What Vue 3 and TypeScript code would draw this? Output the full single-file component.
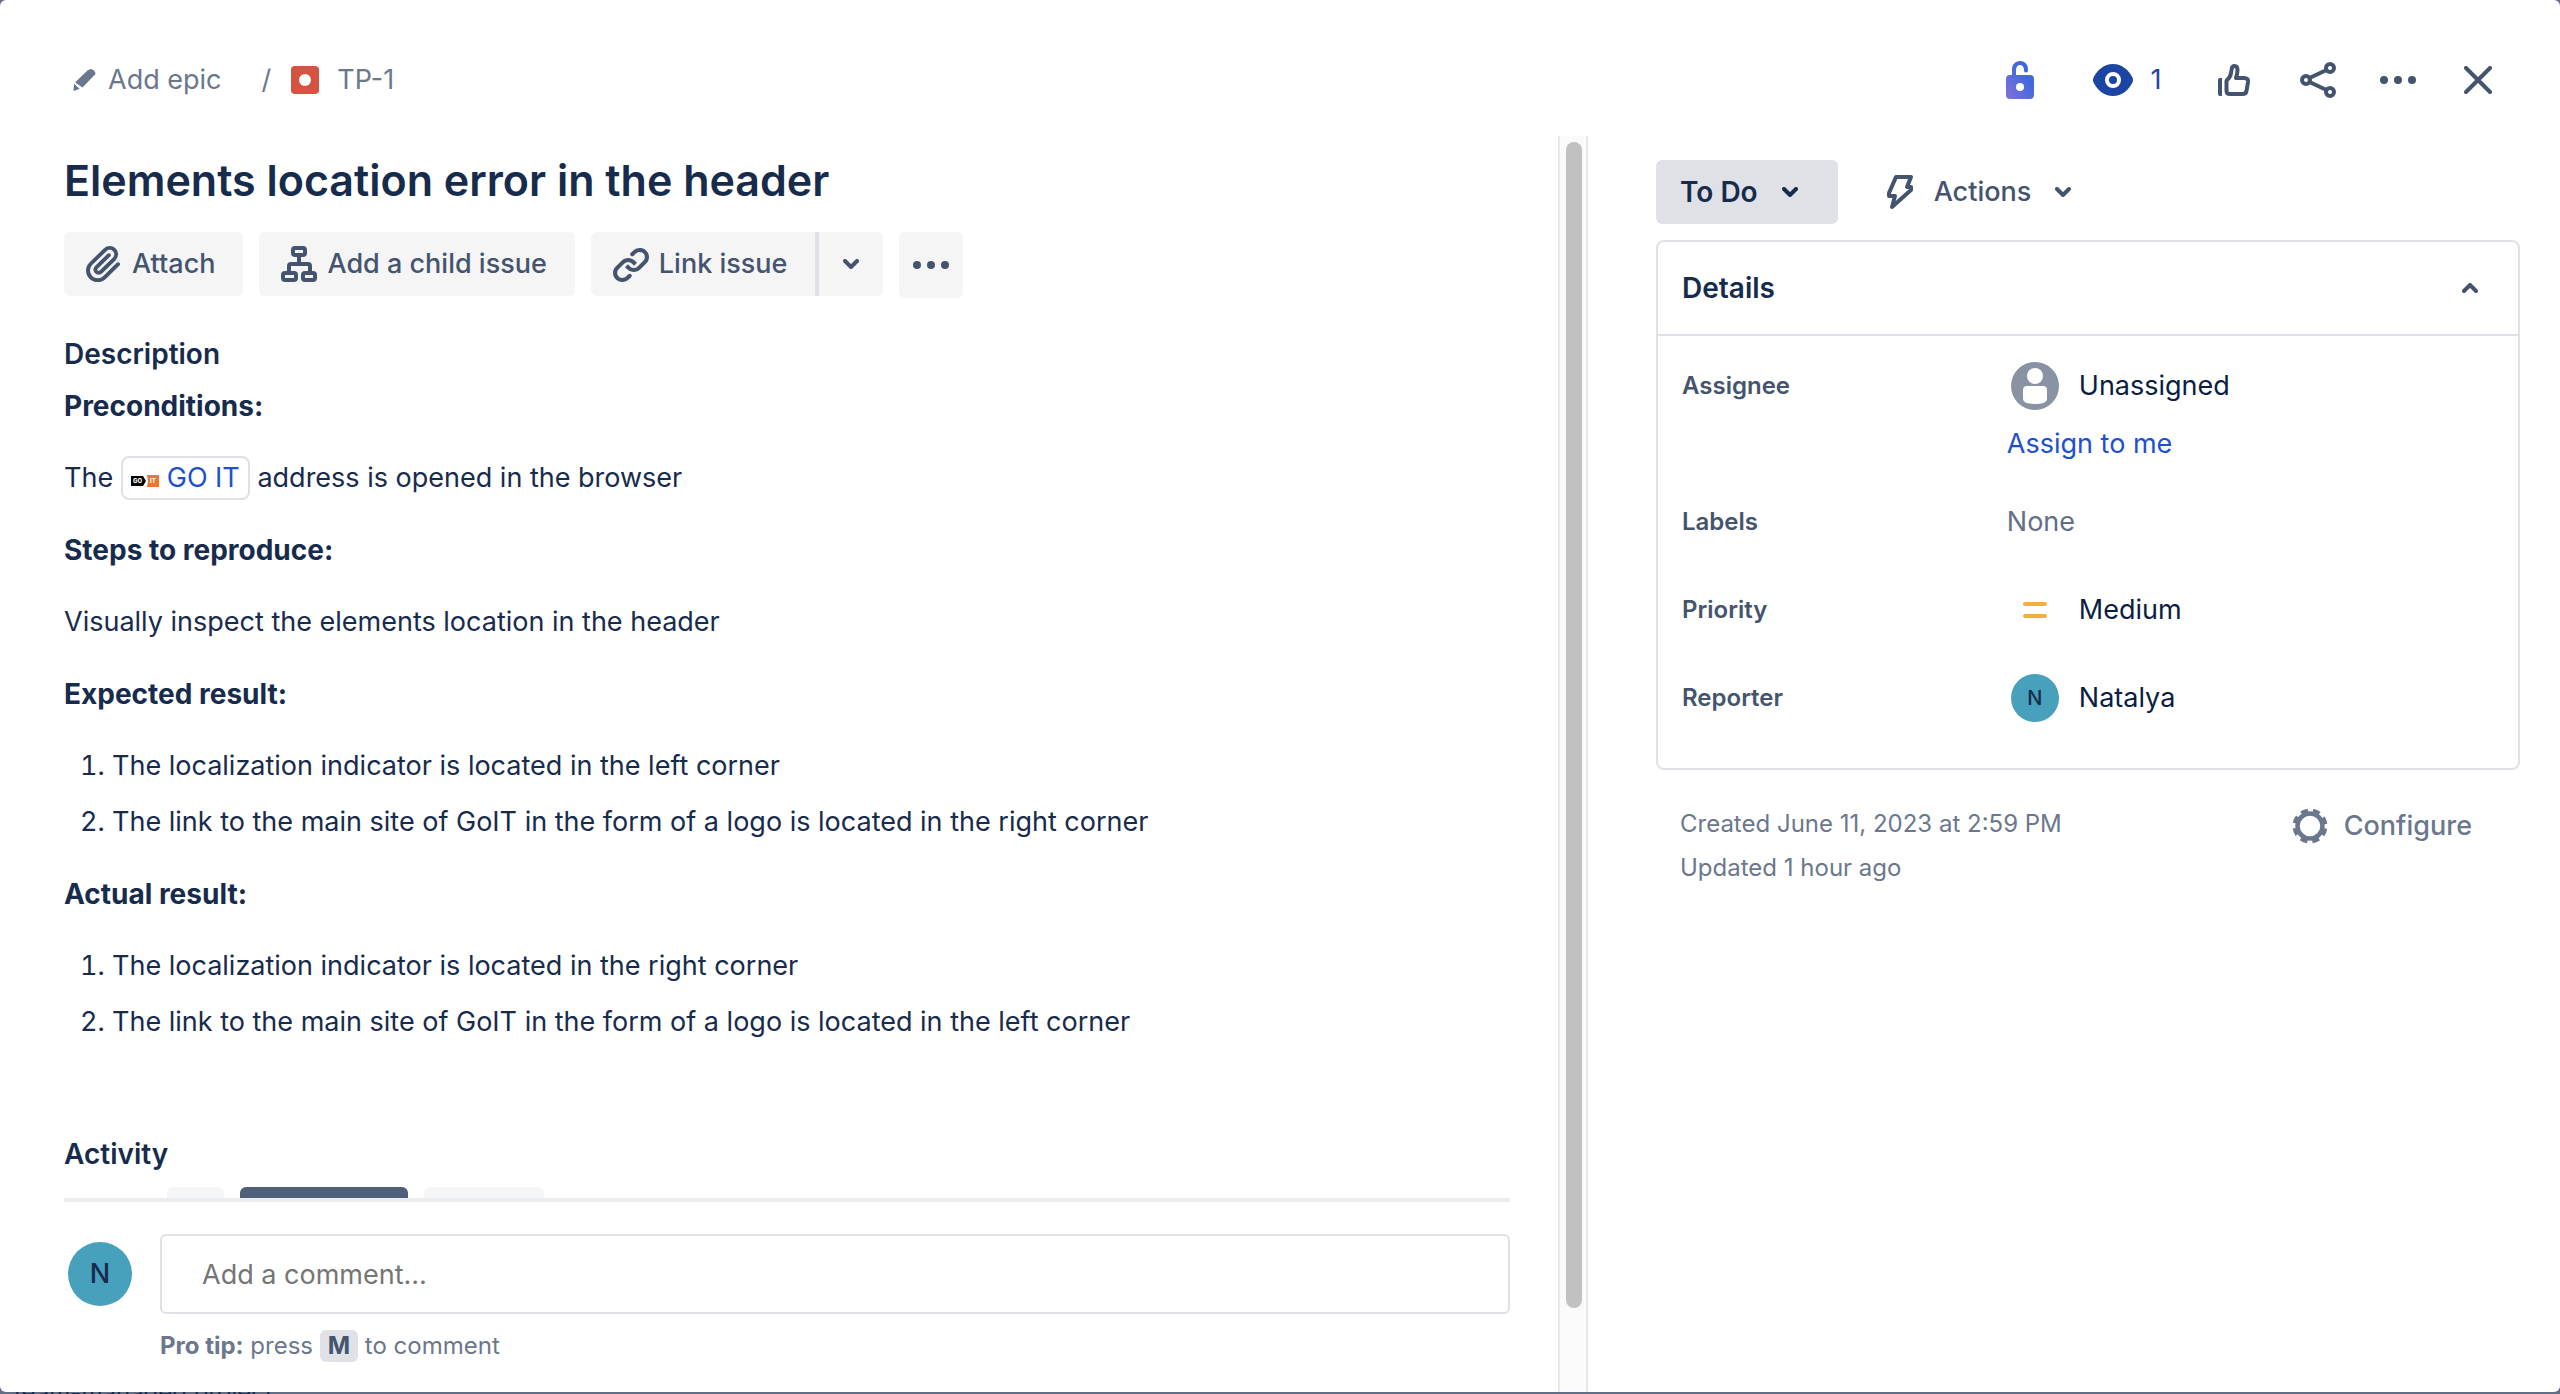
<script setup lang="ts">
import { ref } from 'vue'

interface ResultBlock {
  title: string
  items: string[]
}

const results: ResultBlock[] = [
  {
    title: 'Expected result:',
    items: [
      'The localization indicator is located in the left corner',
      'The link to the main site of GoIT in the form of a logo is located in the right corner',
    ],
  },
  {
    title: 'Actual result:',
    items: [
      'The localization indicator is located in the right corner',
      'The link to the main site of GoIT in the form of a logo is located in the left corner',
    ],
  },
]

const comment = ref('')
</script>

<template>
  <div class="page">
    <main class="modal">
      <header class="topbar">
        <nav class="crumbs" aria-label="Breadcrumbs">
          <button type="button" class="plain crumb-epic">
            <svg width="24" height="24" viewBox="0 0 24 24" aria-hidden="true">
              <path d="M15.500 2.500l3-1.500q2 0 3.500 1.500t1.500 3.500l-13 13.500-7.500-5z" fill="#6b778c" />
              <path d="M2.200 15.500l5.600 5.300-5.300 2q-1.300.3-1-1z" fill="#6b778c" />
              <path d="M1.500 14l8 7.500" stroke="#fff" stroke-width="1.500" />
            </svg>
            Add epic
          </button>
          <span class="slash">/</span>
          <a href="#" class="crumb-key">
            <svg width="28" height="28" viewBox="0 0 28 28" aria-hidden="true">
              <rect width="28" height="28" rx="4" fill="#d75341" />
              <circle cx="14" cy="14" r="6" fill="#fff" />
            </svg>
            TP-1
          </a>
        </nav>
        <div class="tools">
          <button type="button" class="plain tool lock" aria-label="Restrictions">
            <svg width="28" height="40" viewBox="0 0 28 40" aria-hidden="true">
              <defs>
                <linearGradient id="lock" x1="1" y1="0" x2="0" y2="1">
                  <stop offset="0.300" stop-color="#3d68dd" />
                  <stop offset="1" stop-color="#8270db" />
                </linearGradient>
              </defs>
              <path
                fill="url(#lock)" fill-rule="evenodd"
                d="M6 15V9.500C6 4.500 9.500 1 14 1s8 3 8 8.500v1a2 2 0 0 1-4 0V10c0-3-1.500-5-4-5s-4 2-4 5v5h14a4 4 0 0 1 4 4v16a4 4 0 0 1-4 4H4a4 4 0 0 1-4-4V19a4 4 0 0 1 4-4zM14 23a4 4 0 1 0 0 8 4 4 0 0 0 0-8z"
              />
            </svg>
          </button>
          <button type="button" class="plain tool watch" aria-label="Watchers: 1">
            <svg width="40" height="32" viewBox="0 0 40 32" aria-hidden="true">
              <path d="M20 0c9 0 15.500 6 19.200 13q1.600 3 0 6C35.500 26 29 32 20 32S4.500 26 .8 19q-1.600-3 0-6C4.500 6 11 0 20 0z" fill="#1c44a2" />
              <circle cx="20" cy="16" r="6" fill="#1c44a2" stroke="#fff" stroke-width="4" />
            </svg>
            1
          </button>
          <button type="button" class="plain tool vote" aria-label="Vote">
            <svg width="32" height="32" viewBox="0 0 32 32" fill="none" stroke="#44546f" stroke-width="4" stroke-linejoin="round" aria-hidden="true">
              <path d="M0 16q0-2 2-2h2v18H2q-2 0-2-2z" fill="#44546f" stroke="none" />
              <path d="M9 16q3.500-3 4-7l.7-4Q14.200 2 16.500 2q3 0 3 4 0 3-1.500 8h8q4.500 0 4 4l-1.500 9q-.6 3-4 3H12q-3.500 0-3.500-3.500V17z" />
            </svg>
          </button>
          <button type="button" class="plain tool" aria-label="Share">
            <svg width="36" height="36" viewBox="0 0 36 36" fill="none" stroke="#44546f" stroke-width="4" aria-hidden="true">
              <circle cx="6" cy="18" r="4" />
              <circle cx="30" cy="6" r="4" />
              <circle cx="30" cy="30" r="4" />
              <path d="M9.500 16l17-8M9.500 20l17 8" />
            </svg>
          </button>
          <button type="button" class="plain tool" aria-label="More actions">
            <svg width="36" height="8" viewBox="0 0 36 8" fill="#44546f" aria-hidden="true">
              <circle cx="4" cy="4" r="4" /><circle cx="18" cy="4" r="4" /><circle cx="32" cy="4" r="4" />
            </svg>
          </button>
          <button type="button" class="plain tool" aria-label="Close">
            <svg width="28" height="28" viewBox="0 0 28 28" stroke="#44546f" stroke-width="4" stroke-linecap="round" aria-hidden="true">
              <path d="M2 2l24 24M26 2L2 26" />
            </svg>
          </button>
        </div>
      </header>

      <div class="columns">
        <section class="main-col">
          <div class="scroll-area">
            <h1>Elements location error in the header</h1>
            <div class="toolbar">
              <button type="button" class="btn">
                <svg width="48" height="48" viewBox="0 0 24 24" fill="#44546f" aria-hidden="true">
                  <path d="M11.643 17.965c-1.530 1.495-4.016 1.496-5.542.004a3.773 3.773 0 01.002-5.412l7.147-6.985a2.316 2.316 0 013.233-.003c.893.873.895 2.282.004 3.153l-6.703 6.550a.653.653 0 01-.914-.008.620.620 0 010-.902l6.229-6.087a.941.941 0 000-1.353.995.995 0 00-1.384 0l-6.230 6.087a2.502 2.502 0 000 3.607 2.643 2.643 0 003.683.009l6.703-6.550a4.200 4.200 0 00-.004-5.859 4.306 4.306 0 00-6.002.003l-7.148 6.985a5.655 5.655 0 00-.001 8.118c2.290 2.237 6.015 2.238 8.308-.003l6.714-6.560a.941.941 0 000-1.353.995.995 0 00-1.384 0l-6.714 6.560z" />
                </svg>
                Attach
              </button>
              <button type="button" class="btn">
                <svg width="48" height="48" viewBox="0 0 48 48" fill="none" stroke="#44546f" stroke-width="4" aria-hidden="true">
                  <rect x="18" y="8" width="12" height="7" rx="2" />
                  <rect x="8" y="33" width="13" height="7" rx="2" />
                  <rect x="28" y="33" width="12" height="7" rx="2" />
                  <path d="M24 16v8M14 33v-7q0-2 2-2h17q2 0 2 2v7" />
                </svg>
                Add a child issue
              </button>
              <div class="split">
                <button type="button" class="btn">
                  <svg width="48" height="48" viewBox="0 0 24 24" fill="#44546f" aria-hidden="true">
                    <path d="M12.856 5.457l-.937.920a1.002 1.002 0 000 1.437 1.047 1.047 0 001.463 0l.984-.966c.967-.950 2.542-1.135 3.602-.288a2.540 2.540 0 01.203 3.810l-2.903 2.852a2.646 2.646 0 01-3.696 0l-1.110-1.090L9 13.570l1.108 1.089c1.822 1.788 4.802 1.788 6.622 0l2.905-2.852a4.558 4.558 0 00-.357-6.820c-1.893-1.517-4.695-1.226-6.422.470" />
                    <path d="M11.144 19.543l.937-.920a1.002 1.002 0 000-1.437 1.047 1.047 0 00-1.462 0l-.985.966c-.967.950-2.542 1.135-3.602.288a2.540 2.540 0 01-.203-3.810l2.903-2.852a2.646 2.646 0 013.696 0l1.110 1.090L15 11.430l-1.108-1.089c-1.822-1.788-4.802-1.788-6.622 0l-2.905 2.852a4.558 4.558 0 00.357 6.820c1.893 1.517 4.695 1.226 6.422-.470" />
                  </svg>
                  Link issue
                </button>
                <button type="button" class="btn square" aria-label="Link issue options">
                  <svg class="chev" viewBox="0 0 16 10" aria-hidden="true"><path d="M2 2l6 6 6-6" /></svg>
                </button>
              </div>
              <button type="button" class="btn square more" aria-label="More">
                <svg width="36" height="8" viewBox="0 0 36 8" fill="#44546f" aria-hidden="true">
                  <circle cx="4" cy="4" r="4" /><circle cx="18" cy="4" r="4" /><circle cx="32" cy="4" r="4" />
                </svg>
              </button>
            </div>

            <h2>Description</h2>
            <div class="description">
              <p><strong>Preconditions:</strong></p>
              <p>
                The
                <a href="#" class="smart-link"><svg width="28" height="12" viewBox="0 0 28 12" aria-hidden="true">
                  <path d="M0 1h12l3 5-3 5H0z" fill="#000" />
                  <path d="M16 0h12v12H16l1-6z" fill="#f0742f" />
                  <text x="2" y="8" font-size="6" font-weight="800" fill="#fff">GO</text>
                  <text x="19" y="8" font-size="6" font-weight="800" fill="#fff">IT</text>
                </svg>GO IT</a>
                address is opened in the browser
              </p>
              <p><strong>Steps to reproduce:</strong></p>
              <p>Visually inspect the elements location in the header</p>
              <template v-for="block in results" :key="block.title">
                <p><strong>{{ block.title }}</strong></p>
                <ol>
                  <li v-for="item in block.items" :key="item">{{ item }}</li>
                </ol>
              </template>
            </div>

            <h2 class="activity">Activity</h2>
            <div class="tabs" aria-hidden="true">
              <span class="tab tab-all"></span>
              <span class="tab tab-comments"></span>
              <span class="tab tab-history"></span>
            </div>
          </div>

          <form class="comment" @submit.prevent>
            <span class="avatar large">N</span>
            <div class="comment-body">
              <input v-model="comment" type="text" aria-label="Add a comment" placeholder="Add a comment…">
              <p class="tip"><strong>Pro tip:</strong> press <kbd>M</kbd> to comment</p>
            </div>
          </form>
        </section>

        <div class="track"><div class="thumb"></div></div>

        <aside class="side">
          <div class="status-row">
            <button type="button" class="btn status">
              To Do
              <svg class="chev" viewBox="0 0 16 10" aria-hidden="true"><path d="M2 2l6 6 6-6" /></svg>
            </button>
            <button type="button" class="btn actions">
              <svg width="28" height="36" viewBox="0 0 28 36" fill="none" stroke="#44546f" stroke-width="4" stroke-linejoin="round" aria-hidden="true">
                <path d="M10 3h15l-4 10h4v3L6 33l3-11H3v-3z" />
              </svg>
              Actions
              <svg class="chev" viewBox="0 0 16 10" aria-hidden="true"><path d="M2 2l6 6 6-6" /></svg>
            </button>
          </div>

          <section class="card">
            <button type="button" class="card-head">
              Details
              <svg class="chev" viewBox="0 0 16 10" aria-hidden="true"><path d="M2 8l6-6 6 6" /></svg>
            </button>
            <dl>
              <div class="field assignee">
                <dt>Assignee</dt>
                <dd>
                  <span class="person">
                    <svg width="48" height="48" viewBox="0 0 48 48" aria-hidden="true">
                      <circle cx="24" cy="24" r="24" fill="#8993a4" />
                      <circle cx="24" cy="14" r="8" fill="#fff" />
                      <path d="M12 28q0-4 4-4h16q4 0 4 4v9q0 5-12 5t-12-5z" fill="#fff" />
                    </svg>
                    Unassigned
                  </span>
                  <a href="#">Assign to me</a>
                </dd>
              </div>
              <div class="field">
                <dt>Labels</dt>
                <dd class="none">None</dd>
              </div>
              <div class="field">
                <dt>Priority</dt>
                <dd>
                  <span class="person">
                    <svg width="48" height="48" viewBox="0 0 48 48" fill="#f5ae3c" aria-hidden="true">
                      <rect x="12" y="16" width="24" height="4" rx="2" />
                      <rect x="12" y="28" width="24" height="4" rx="2" />
                    </svg>
                    Medium
                  </span>
                </dd>
              </div>
              <div class="field">
                <dt>Reporter</dt>
                <dd>
                  <span class="person"><span class="avatar">N</span>Natalya</span>
                </dd>
              </div>
            </dl>
          </section>

          <footer class="meta">
            <div class="dates">
              <p>Created June 11, 2023 at 2:59 PM</p>
              <p>Updated 1 hour ago</p>
            </div>
            <button type="button" class="plain configure">
              <svg width="36" height="36" viewBox="0 0 36 36" fill="none" stroke="#6b778c" aria-hidden="true">
                <circle cx="18" cy="18" r="12.500" stroke-width="4.500" />
                <circle cx="18" cy="18" r="15.500" stroke-width="4" stroke-dasharray="7 5.174" stroke-dashoffset="-2.587" />
              </svg>
              Configure
            </button>
          </footer>
        </aside>
      </div>
    </main>
    <div class="backdrop-text"><span>team-managed project</span></div>
  </div>
</template>

<style>
body {
  background: #636d86;
}
</style>

<style scoped>
.page {
  display: flex;
  flex-direction: column;
  min-height: 100vh;
  font-family: Inter, "Liberation Sans", sans-serif;
  font-size: 27px;
  line-height: 48px;
  color: #172b4d;
}
.modal {
  flex: 1;
  display: flex;
  flex-direction: column;
  background: #fff;
  border-radius: 6px;
}
h1, h2, p, ol, dl, dd {
  margin: 0;
}
button, input {
  font: inherit;
  color: inherit;
}
button {
  cursor: pointer;
}
a {
  color: #1d50cf;
  text-decoration: none;
}
svg {
  flex: none;
}
strong {
  font-weight: 700;
}
.plain {
  display: flex;
  align-items: center;
  border: 0;
  padding: 0;
  background: none;
}
.chev {
  width: 16px;
  height: 10px;
  fill: none;
  stroke: currentColor;
  stroke-width: 4px;
  stroke-linecap: round;
  stroke-linejoin: round;
}

.topbar {
  display: flex;
  justify-content: space-between;
  align-items: center;
  padding: 48px 50px 24px 72px;
  height: 64px;
}
.crumbs, .crumb-key {
  display: flex;
  align-items: center;
  color: #6b778c;
}
.crumb-epic {
  gap: 12px;
}
.slash {
  margin: 0 20px 0 40px;
}
.crumb-key {
  gap: 18px;
}
.tools {
  display: flex;
  align-items: center;
  gap: 16px;
}
.tool {
  justify-content: center;
  width: 64px;
  height: 64px;
}
.watch {
  gap: 18px;
  width: 102px;
  color: #1c44a2;
}
.lock {
  margin-right: 8px;
}
.vote {
  margin: 0 4px 0 8px;
}

.columns {
  flex: 1;
  display: grid;
  grid-template-columns: minmax(0, 1558fr) 30px minmax(0, 972fr);
}
.main-col {
  display: flex;
  flex-direction: column;
  padding: 0 48px 30px 64px;
}
.scroll-area {
  flex: 1;
  display: flex;
  flex-direction: column;
  border-bottom: 4px solid #ebecf0;
}
h1 {
  padding: 16px 0 24px;
  font-size: 43px;
  font-weight: 600;
  line-height: 56px;
}
.toolbar {
  display: flex;
  align-items: flex-start;
  gap: 16px;
}
.btn {
  display: flex;
  align-items: center;
  gap: 4px;
  height: 64px;
  padding: 0 28px 0 16px;
  border: 0;
  border-radius: 6px;
  background: #f5f5f5;
  color: #44546f;
  font-weight: 500;
}
.split {
  display: flex;
}
.split .btn:first-child {
  border-radius: 6px 0 0 6px;
  border-right: 4px solid #dfe1e6;
}
.split .square {
  border-radius: 0 6px 6px 0;
}
.btn.square {
  justify-content: center;
  width: 64px;
  padding: 0;
}
.more {
  height: 66px;
}
h2, strong {
  font-size: 28px;
}
h2 {
  margin-top: 32px;
  font-weight: 600;
}
.description {
  display: flex;
  flex-direction: column;
  gap: 24px;
  margin-top: 4px;
}
.smart-link {
  display: inline-block;
  padding: 0 8px;
  border: 2px solid #dfe1e6;
  border-radius: 8px;
  line-height: 40px;
}
.smart-link svg {
  margin-right: 8px;
}
.description p {
  height: 48px;
}
ol {
  display: flex;
  flex-direction: column;
  gap: 8px;
  padding-left: 48px;
}
.activity {
  margin-top: 84px;
}
.tabs {
  display: flex;
  gap: 16px;
  height: 11px;
  margin-top: auto;
  padding-left: 103px;
}
.tab {
  border-radius: 6px 6px 0 0;
  background: #f4f5f7;
}
.tab-all {
  width: 57px;
}
.tab-comments {
  width: 168px;
  background: #505f79;
}
.tab-history {
  width: 120px;
}
.comment {
  display: flex;
  gap: 28px;
  padding-top: 32px;
}
.avatar {
  display: flex;
  align-items: center;
  justify-content: center;
  flex: none;
  width: 48px;
  height: 48px;
  border-radius: 50%;
  background: #47a0bc;
  color: #172b4d;
  font-size: 20px;
  font-weight: 500;
}
.avatar.large {
  width: 64px;
  height: 64px;
  margin: 8px 0 0 4px;
  font-size: 27px;
}
.comment-body {
  flex: 1;
}
.comment input {
  display: block;
  box-sizing: border-box;
  width: 100%;
  height: 80px;
  padding: 0 40px;
  border: 2px solid #dfe1e6;
  border-radius: 6px;
  background: #fff;
}
.comment input::placeholder {
  color: #757575;
  opacity: 1;
}
.tip, .tip strong {
  font-size: 24px;
}
.tip {
  margin-top: 16px;
  line-height: 32px;
  color: #6b778c;
}
kbd {
  display: inline-block;
  padding: 0 8px;
  border-radius: 6px;
  background: #dfe1e6;
  color: #44546f;
  font-family: inherit;
  font-weight: 700;
}

.track {
  box-sizing: border-box;
  padding: 6px 6px 0;
  border: solid #e8e8e8;
  border-width: 0 2px;
  background: #fafafa;
}
.thumb {
  width: 16px;
  height: calc(100% - 84px);
  border-radius: 8px;
  background: #c1c1c1;
}

.side {
  padding: 24px 40px 24px 68px;
}
.status-row {
  display: flex;
  gap: 24px;
}
.status {
  gap: 24px;
  padding: 0 40px 0 24px;
  background: #dfe1e6;
  color: #172b4d;
  font-size: 28px;
  font-weight: 600;
}
.actions {
  gap: 20px;
  padding: 0 24px;
  background: none;
}
.actions .chev {
  margin-left: 4px;
}
.card {
  margin-top: 16px;
  border: 2px solid #dfe1e6;
  border-radius: 8px;
}
.card-head {
  display: flex;
  align-items: center;
  justify-content: space-between;
  width: 100%;
  height: 94px;
  padding: 0 40px 0 24px;
  border: 0;
  border-bottom: 2px solid #dfe1e6;
  background: none;
  font-size: 28px;
  font-weight: 600;
}
.card-head .chev {
  color: #44546f;
}
dl {
  display: flex;
  flex-direction: column;
  gap: 40px;
  padding: 26px 24px 46px;
}
.field {
  display: grid;
  grid-template-columns: 40% 60%;
}
.assignee {
  margin-bottom: -10px;
}
dt {
  font-size: 24px;
  font-weight: 600;
  color: #44546f;
}
dd a {
  display: block;
  margin-top: 10px;
}
.none {
  color: #626f86;
}
.person {
  display: flex;
  align-items: center;
  gap: 20px;
  padding-left: 4px;
  color: #091e42;
}
.meta {
  display: flex;
  justify-content: space-between;
  align-items: flex-start;
  padding: 32px 48px 0 24px;
  color: #6b778c;
}
.dates {
  font-size: 24px;
  line-height: 44px;
}
.configure {
  gap: 16px;
  font-weight: 500;
}
.backdrop-text {
  display: flex;
  align-items: center;
  height: 2px;
  padding-left: 14px;
  overflow: hidden;
  color: #172b4d;
  font-size: 24px;
}
</style>
